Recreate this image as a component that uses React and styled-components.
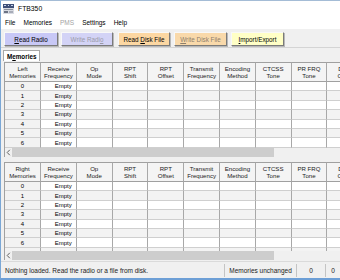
import React from 'react';
import styled, { createGlobalStyle } from 'styled-components';

const GlobalStyle = createGlobalStyle`
  html, body {
    margin: 0;
    padding: 0;
    background: #f0f0f0;
  }
  body {
    font-family: "Liberation Sans", Arial, sans-serif;
    font-size: 6.5px;
    color: #000;
  }
`;

// window frame
const Window = styled.div`
  width: 340px;
  height: 280px;
  box-sizing: border-box;
  border-left: 1px solid #7aa7d6;
  border-top: 1px solid #a4bcd6;
  border-bottom: 2px solid #6d9fd6;
  display: flex;
  flex-direction: column;
  overflow: hidden;
  background: #f0f0f0;
`;

const TitleBar = styled.div`
  height: 15px;
  flex: none;
  display: flex;
  align-items: center;
  gap: 4px;
  padding-left: 2px;
  background: #fff;
  font-size: 6.8px;
`;

const MenuBar = styled.div`
  height: 13px;
  flex: none;
  display: flex;
  align-items: center;
  background: #fff;
`;

const MenuItem = styled.span`
  padding: 0 4px;
  color: ${(p) => (p.disabled ? '#a3a3a3' : '#000')};
`;

const Toolbar = styled.div`
  flex: none;
  display: flex;
  align-items: flex-start;
  padding: 3px 0 0 3px;
  box-sizing: border-box;
  height: 19px;
  border-bottom: 1px solid #d4d4d4;
`;

const Button = styled.div`
  width: ${(p) => p.w}px;
  margin-right: ${(p) => p.gap}px;
  height: 14px;
  box-sizing: border-box;
  display: flex;
  align-items: center;
  justify-content: center;
  background: ${(p) => p.bg};
  color: ${(p) => p.fg || '#000'};
  border: 1px solid;
  border-color: #f8f8f8 #7a7a7a #7a7a7a #f8f8f8;
  box-shadow: 1px 1px 0 #b8b8b8;
  font-size: 6.3px;
`;

const Key = styled.span`
  text-decoration: underline;
`;

const TabStrip = styled.div`
  height: 13px;
  flex: none;
  display: flex;
  align-items: flex-end;
  padding-left: 2px;
`;

const Tab = styled.div`
  height: 11px;
  box-sizing: border-box;
  padding: 0 3px;
  display: flex;
  align-items: center;
  background: #fff;
  border: 1px solid #a8a8a8;
  border-bottom: none;
  font-weight: bold;
  font-size: 6.3px;
`;

const TabPage = styled.div`
  height: 199px;
  flex: none;
  display: flex;
  flex-direction: column;
  padding: 1px 0 0 3px;
  box-sizing: border-box;
`;

const GridPanel = styled.div`
  display: flex;
  flex-direction: column;
  flex: none;
  overflow: hidden;
  border-left: 1px solid #a0a0a0;
`;

const Grid = styled.div`
  display: grid;
  grid-template-columns: 36px repeat(9, 35.8px);
  width: 358px;
`;

const Body = styled.div`
  height: ${(p) => p.h}px;
  overflow: hidden;
`;

const HeadCell = styled.div`
  height: 20px;
  box-sizing: border-box;
  display: flex;
  flex-direction: column;
  align-items: center;
  justify-content: center;
  line-height: 7px;
  font-size: 6.1px;
  color: #222;
  background: #f4f4f4;
  border-top: 1px solid #a0a0a0;
  border-right: 1px solid #a8a8a8;
  border-bottom: 1px solid #a0a0a0;
`;

const Cell = styled.div`
  height: 9.4px;
  box-sizing: border-box;
  display: flex;
  align-items: center;
  justify-content: ${(p) => (p.right ? 'flex-end' : 'center')};
  padding-right: ${(p) => (p.right ? 4 : 0)}px;
  font-size: 6px;
  background: ${(p) => (p.head ? '#f2f2f2' : p.odd ? '#f3f3f3' : '#fff')};
  border-right: 1px solid #a8a8a8;
  border-bottom: 1px solid #cfcfcf;
`;

const HScroll = styled.div`
  height: 9px;
  flex: none;
  display: flex;
  align-items: stretch;
  background: #f0f0f0;
`;

const ArrowBtn = styled.div`
  width: 7px;
  display: flex;
  align-items: center;
  justify-content: center;
`;

const Thumb = styled.div`
  width: ${(p) => p.w}px;
  background: #cdcdcd;
`;

const Splitter = styled.div`
  height: 5px;
  flex: none;
`;

const StatusBar = styled.div`
  height: 17px;
  flex: none;
  margin-top: 1px;
  display: flex;
  align-items: center;
  border-top: 1px solid #dadada;
  box-sizing: border-box;
`;

const StatusText = styled.div`
  flex: 1;
  padding-left: 4px;
  color: #222;
`;

const StatusPanel = styled.div`
  width: ${(p) => p.w}px;
  flex: none;
  height: 13px;
  display: flex;
  align-items: center;
  justify-content: center;
  border-left: 1px solid #c4c4c4;
  color: #222;
`;

const AppIcon = () => (
  <svg width="11" height="10" viewBox="0 0 11 10">
    <rect x="0" y="0" width="11" height="10" fill="#d8dbe2" />
    <rect x="0" y="0" width="11" height="4" fill="#3f5078" />
    <rect x="1" y="1" width="2" height="1" fill="#c9d4ea" />
    <rect x="5" y="1" width="1" height="1" fill="#c9d4ea" />
    <rect x="8" y="1" width="2" height="1" fill="#c9d4ea" />
    <rect x="1" y="5" width="9" height="1" fill="#8a8f9c" />
    <rect x="1" y="7" width="4" height="2" fill="#6c7384" />
    <rect x="6" y="7" width="4" height="2" fill="#a7acb8" />
  </svg>
);

const LeftArrow = () => (
  <svg width="5" height="7" viewBox="0 0 5 7">
    <path d="M3.8 0.8 L1.2 3.5 L3.8 6.2" fill="none" stroke="#606060" strokeWidth="1" />
  </svg>
);

const COLUMNS = [
  ['Receive', 'Frequency'],
  ['Op', 'Mode'],
  ['RPT', 'Shift'],
  ['RPT', 'Offset'],
  ['Transmit', 'Frequency'],
  ['Encoding', 'Method'],
  ['CTCSS', 'Tone'],
  ['PR FRQ', 'Tone'],
  ['DCS', 'Code'],
];

const ROWS = [0, 1, 2, 3, 4, 5, 6];

// rows below the fold only peek out as empty cells
const MemoryGrid = ({ side, bodyHeight, extraRow }) => (
  <GridPanel>
    <Grid>
      <HeadCell>
        <span>{side}</span>
        <span>Memories</span>
      </HeadCell>
      {COLUMNS.map(([a, b]) => (
        <HeadCell key={a + b}>
          <span>{a}</span>
          <span>{b}</span>
        </HeadCell>
      ))}
    </Grid>
    <Body h={bodyHeight}>
      <Grid>
        {ROWS.map((r) => (
          <React.Fragment key={r}>
            <Cell head>{r}</Cell>
            {COLUMNS.map((c, i) => (
              <Cell key={i} odd={r % 2 === 1} right={i === 0}>
                {i === 0 ? 'Empty' : ''}
              </Cell>
            ))}
          </React.Fragment>
        ))}
        {extraRow && (
          <>
            <Cell head />
            {COLUMNS.map((c, i) => (
              <Cell key={i} odd />
            ))}
          </>
        )}
      </Grid>
    </Body>
    <HScroll>
      <ArrowBtn>
        <LeftArrow />
      </ArrowBtn>
      <Thumb w={262} />
    </HScroll>
  </GridPanel>
);

const App = () => (
  <>
    <GlobalStyle />
    <Window>
      <TitleBar>
        <AppIcon />
        <span>FTB350</span>
      </TitleBar>
      <MenuBar>
        <MenuItem>File</MenuItem>
        <MenuItem>Memories</MenuItem>
        <MenuItem disabled>PMS</MenuItem>
        <MenuItem>Settings</MenuItem>
        <MenuItem>Help</MenuItem>
      </MenuBar>
      <Toolbar>
        <Button w={54} gap={3} bg="#c8c8f6">
          <span><Key>R</Key>ead Radio</span>
        </Button>
        <Button w={52} gap={5} bg="#d3d3f6" fg="#9a9aa8">
          <span>Write Radi<Key>o</Key></span>
        </Button>
        <Button w={52} gap={4} bg="#fcd7a2">
          <span>Read <Key>D</Key>isk File</span>
        </Button>
        <Button w={53} gap={4} bg="#f9d9aa" fg="#8d7f6c">
          <span><Key>W</Key>rite Disk File</span>
        </Button>
        <Button w={53} gap={0} bg="#ffffc6">
          <span><Key>I</Key>mport/Export</span>
        </Button>
      </Toolbar>
      <TabStrip>
        <Tab>
          <span>M<Key>e</Key>mories</span>
        </Tab>
      </TabStrip>
      <TabPage>
        <MemoryGrid side="Left" bodyHeight={66} />
        <Splitter />
        <MemoryGrid side="Right" bodyHeight={69} extraRow />
      </TabPage>
      <StatusBar>
        <StatusText>Nothing loaded. Read the radio or a file from disk.</StatusText>
        <StatusPanel w={71}>Memories unchanged</StatusPanel>
        <StatusPanel w={28}>0</StatusPanel>
        <StatusPanel w={14}>0</StatusPanel>
      </StatusBar>
    </Window>
  </>
);

export default App;
